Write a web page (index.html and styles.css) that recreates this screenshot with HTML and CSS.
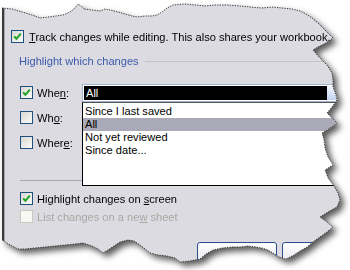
FILE: index.html
```html
<!DOCTYPE html>
<html lang="en">
<head>
  <meta charset="UTF-8">
  <title>Highlight Changes</title>
  <link rel="stylesheet" href="styles.css">
</head>
<body>

  <div class="sheet">
    <!-- Dialog cut out with a torn edge -->
    <div class="dialog">

      <div class="row track">
        <span class="box"><svg viewBox="0 0 9 9"><polyline points="1.2,4.3 3.4,6.8 7.8,1.6"/></svg></span>
        <span><u>T</u>rack changes while editing. This also shares your workbook.</span>
      </div>

      <div class="group-title">
        <span>Highlight which changes</span>
        <span class="rule"></span>
      </div>

      <div class="changes">
        <div class="filters">
          <div class="row">
            <span class="box"><svg viewBox="0 0 9 9"><polyline points="1.2,4.3 3.4,6.8 7.8,1.6"/></svg></span>
            <span>Whe<u>n</u>:</span>
          </div>
          <div class="row">
            <span class="box"></span>
            <span>Wh<u>o</u>:</span>
          </div>
          <div class="row">
            <span class="box"></span>
            <span>Wher<u>e</u>:</span>
          </div>
        </div>

        <div class="combo-col">
          <div class="combo">
            <div class="field">All</div>
            <span class="arrow"></span>
          </div>
          <!-- open dropdown -->
          <ul class="list">
            <li>Since I last saved</li>
            <li class="sel">All</li>
            <li>Not yet reviewed</li>
            <li>Since date...</li>
          </ul>
        </div>
      </div>

      <div class="separator"></div>

      <div class="row option">
        <span class="box"><svg viewBox="0 0 9 9"><polyline points="1.2,4.3 3.4,6.8 7.8,1.6"/></svg></span>
        <span>Highlight changes on <u>s</u>creen</span>
      </div>
      <div class="row option disabled">
        <span class="box"></span>
        <span>List changes on a ne<u>w</u> sheet</span>
      </div>

      <div class="buttons">
        <button>OK</button>
        <button>Cancel</button>
      </div>
    </div>

    <!-- dotted line along the tear -->
    <svg class="tear" viewBox="0 0 350 270">
      <polyline points="2,8 12,9 22,12 32,15 40,18 48,17 56,16 63,15 70,12 75,8 78,4 81,6 84,9 92,10 100,11 105,9 110,10 118,12 125,14 132,16 137,17 145,16 152,16 157,15 162,12 167,8 173,5 185,4 195,5 205,6 215,5 227,5 240,6 250,7 262,8 272,7 282,8 292,9 300,11 306,14 312,18 318,23 325,30 333,38 326,43 318,47 313,50 320,58 327,65 332,73 333,80 333,87 336,95 337,100 332,107 327,113 332,118 337,123 330,128 322,133 324,140 325,148 328,157 333,165 325,170 328,178 334,186 338,193 340,200 337,207 328,212 320,217 327,222 333,227 327,232 320,237 313,242 307,247 300,251 294,255 286,259 279,257 273,253 268,250 262,248 256,247 248,246 240,247 232,247 222,248 213,250 206,254 200,259 190,261 180,262 175,258 167,256 158,255 150,253 145,249 140,245 134,241 128,240 120,242 114,246 108,250 103,253 98,249 92,246 83,243 75,244 65,245 55,246 45,247 35,248 25,249 18,249 12,246 7,243 2,240"/>
    </svg>
  </div>

</body>
</html>
```

FILE: styles.css
```css
/* General */
body {
  margin: 0;
  background: #fff;
  font-family: "Liberation Sans", Arial, sans-serif;
  font-size: 11.1px;
  color: #000;
}

u {
  text-decoration: underline;
  text-underline-offset: 1px;
}

.sheet {
  position: relative;
  width: 350px;
  height: 270px;
  filter: drop-shadow(4px 4px 3px rgba(0, 0, 0, 0.65));
}

.dialog {
  width: 350px;
  height: 270px;
  box-sizing: border-box;
  padding-top: 30px;
  overflow: hidden;
  background: linear-gradient(to right, #fff 0 2px, #3c3c3c 2px 4px, #a4a4ac 4px 5px, #dcdbe2 5px);
  clip-path: polygon(2px 8px, 12px 9px, 22px 12px, 32px 15px, 40px 18px, 48px 17px, 56px 16px, 63px 15px, 70px 12px, 75px 8px, 78px 4px, 81px 6px, 84px 9px, 92px 10px, 100px 11px, 105px 9px, 110px 10px, 118px 12px, 125px 14px, 132px 16px, 137px 17px, 145px 16px, 152px 16px, 157px 15px, 162px 12px, 167px 8px, 173px 5px, 185px 4px, 195px 5px, 205px 6px, 215px 5px, 227px 5px, 240px 6px, 250px 7px, 262px 8px, 272px 7px, 282px 8px, 292px 9px, 300px 11px, 306px 14px, 312px 18px, 318px 23px, 325px 30px, 333px 38px, 326px 43px, 318px 47px, 313px 50px, 320px 58px, 327px 65px, 332px 73px, 333px 80px, 333px 87px, 336px 95px, 337px 100px, 332px 107px, 327px 113px, 332px 118px, 337px 123px, 330px 128px, 322px 133px, 324px 140px, 325px 148px, 328px 157px, 333px 165px, 325px 170px, 328px 178px, 334px 186px, 338px 193px, 340px 200px, 337px 207px, 328px 212px, 320px 217px, 327px 222px, 333px 227px, 327px 232px, 320px 237px, 313px 242px, 307px 247px, 300px 251px, 294px 255px, 286px 259px, 279px 257px, 273px 253px, 268px 250px, 262px 248px, 256px 247px, 248px 246px, 240px 247px, 232px 247px, 222px 248px, 213px 250px, 206px 254px, 200px 259px, 190px 261px, 180px 262px, 175px 258px, 167px 256px, 158px 255px, 150px 253px, 145px 249px, 140px 245px, 134px 241px, 128px 240px, 120px 242px, 114px 246px, 108px 250px, 103px 253px, 98px 249px, 92px 246px, 83px 243px, 75px 244px, 65px 245px, 55px 246px, 45px 247px, 35px 248px, 25px 249px, 18px 249px, 12px 246px, 7px 243px, 2px 240px);
}

.tear {
  position: absolute;
  left: 0;
  top: 0;
  width: 350px;
  height: 270px;
}

.tear polyline {
  fill: none;
  stroke: #2b2b2b;
  stroke-width: 0.9;
  stroke-dasharray: 1.3 1.2;
}

/* Checkbox rows */
.row {
  display: flex;
  align-items: center;
  gap: 4px;
  height: 13px;
  white-space: nowrap;
}

.box {
  flex: none;
  width: 13px;
  height: 13px;
  box-sizing: border-box;
  border: 1px solid #1c5180;
  background: linear-gradient(135deg, #d8d8d2, #fbfbf9);
  display: flex;
  align-items: center;
  justify-content: center;
}

.box svg {
  width: 9px;
  height: 9px;
}

.box polyline {
  fill: none;
  stroke: #21a121;
  stroke-width: 2;
}

.track {
  margin-left: 11px;
  gap: 5px;
}

.group-title {
  display: flex;
  align-items: center;
  height: 14px;
  margin: 11px 20px 0 19px;
  color: #3c5aaa;
}

.group-title .rule {
  flex: 1;
  height: 1px;
  margin-left: 6px;
  background: #c2c2cb;
}

/* When / Who / Where */
.changes {
  display: grid;
  grid-template-columns: 62px 1fr;
  margin: 16px 0 0 20px;
}

.filters {
  display: flex;
  flex-direction: column;
  gap: 12px;
  padding-top: 2px;
}

.combo-col {
  position: relative;
}

.combo {
  display: flex;
  width: 262px;
  height: 18px;
  box-sizing: border-box;
  border: 1px solid #a3b5d2;
  padding: 1px;
  background: #fff;
}

.combo .field {
  flex: 1;
  background: #000;
  color: #fff;
  line-height: 14px;
  padding-left: 2px;
}

.combo .arrow {
  width: 15px;
  background: linear-gradient(#f4f7fd, #c3d3f3);
}

.list {
  position: absolute;
  left: 0;
  top: 18px;
  width: 262px;
  height: 84px;
  box-sizing: border-box;
  margin: 0;
  padding: 2px 0 0;
  list-style: none;
  background: #fff;
  border: 1px solid #000;
  border-top-color: #555;
}

.list li {
  height: 13px;
  line-height: 13px;
  padding-left: 2px;
}

.list li.sel {
  background: #a9a9b7;
}

.separator {
  width: 62px;
  height: 1px;
  margin: 31px 0 0 20px;
  background: #a9a9b3;
}

.option {
  margin: 11px 0 0 20px;
}

.option.disabled {
  margin-top: 5px;
  color: #a9a8a2;
}

.option.disabled .box {
  border-color: #cbc9bf;
  background: #f7f7f4;
}

/* Buttons (mostly lost under the tear) */
.buttons {
  display: flex;
  gap: 5px;
  margin-top: 19px;
  padding-left: 197px;
}

.buttons button {
  flex: none;
  width: 80px;
  height: 23px;
  padding: 0;
  border: 1px solid #2a4f8f;
  border-radius: 3px;
  background: linear-gradient(#ffffff, #e6e6ee);
  font: inherit;
}
```
